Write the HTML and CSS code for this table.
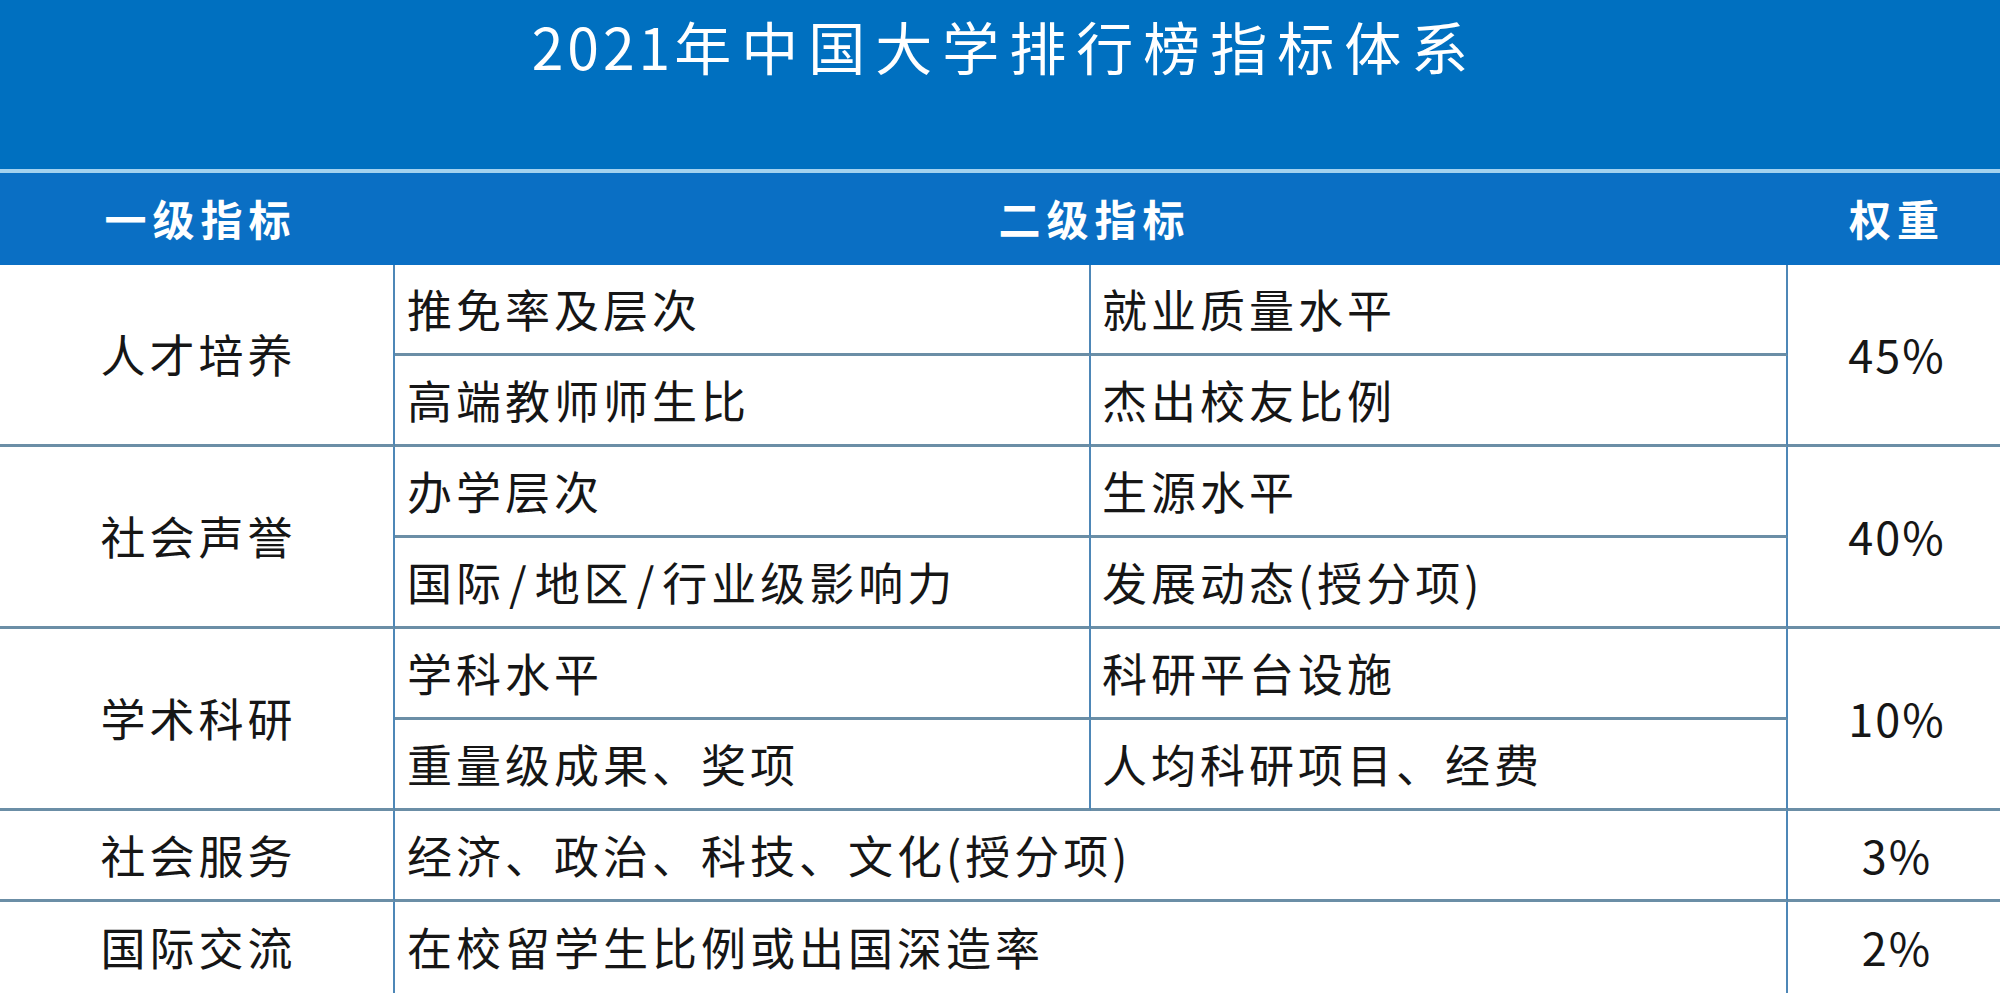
FILE: index.html
```html
<!DOCTYPE html>
<html lang="zh-CN">
<head>
<meta charset="utf-8">
<title>2021年中国大学排行榜指标体系</title>
<link rel="stylesheet" href="styles.css">
</head>
<body>
<div class="page">
  <header class="banner">
    <h1 class="title"><span class="digits">2021</span>年中国大学排行榜指标体系</h1>
  </header>
  <div class="head-row">
    <div class="hcell">一级指标</div>
    <div class="hcell">二级指标</div>
    <div class="hcell">权重</div>
  </div>
  <div class="grid">
    <div class="cell c1 r1-2">人才培养</div>
    <div class="cell c2">推免率及层次</div>
    <div class="cell c3">就业质量水平</div>
    <div class="cell c4 r1-2">45%</div>
    <div class="cell c2">高端教师师生比</div>
    <div class="cell c3">杰出校友比例</div>

    <div class="cell c1 r3-4">社会声誉</div>
    <div class="cell c2">办学层次</div>
    <div class="cell c3">生源水平</div>
    <div class="cell c4 r3-4">40%</div>
    <div class="cell c2">国际<span class="sl">/</span>地区<span class="sl">/</span>行业级影响力</div>
    <div class="cell c3">发展动态(授分项)</div>

    <div class="cell c1 r5-6">学术科研</div>
    <div class="cell c2">学科水平</div>
    <div class="cell c3">科研平台设施</div>
    <div class="cell c4 r5-6">10%</div>
    <div class="cell c2">重量级成果、奖项</div>
    <div class="cell c3">人均科研项目、经费</div>

    <div class="cell c1">社会服务</div>
    <div class="cell c23">经济、政治、科技、文化(授分项)</div>
    <div class="cell c4">3%</div>

    <div class="cell c1 last">国际交流</div>
    <div class="cell c23 last">在校留学生比例或出国深造率</div>
    <div class="cell c4 last">2%</div>
  </div>
</div>
</body>
</html>
```

FILE: styles.css
```css
* { box-sizing: border-box; }
html, body {
  margin: 0;
  padding: 0;
  background: #ffffff;
}
body {
  font-family: "Noto Sans CJK SC", "Noto Sans", sans-serif;
  width: 2000px;
  height: 994px;
  overflow: hidden;
}
.page {
  display: flex;
  flex-direction: column;
  width: 2000px;
}
.banner {
  height: 173px;
  background: #0070c0;
  border-bottom: 4px solid #a3d2ef;
}
.title {
  margin: 0;
  padding-top: 8px;
  height: 80px;
  line-height: 74px;
  text-align: center;
  color: #ffffff;
  font-weight: 400;
  font-size: 57px;
  letter-spacing: 10px;
  padding-left: 10px;
}
.digits {
  letter-spacing: 4px;
}
.head-row {
  display: grid;
  grid-template-columns: 395px 1393px 212px;
  height: 92px;
  background: #0a6fc4;
  color: #ffffff;
}
.hcell {
  display: flex;
  align-items: center;
  justify-content: center;
  font-size: 42px;
  font-weight: 700;
  letter-spacing: 6px;
  padding-left: 6px;
  padding-bottom: 4px;
}
.grid {
  display: grid;
  grid-template-columns: 395px 696px 697px 212px;
  grid-template-rows: repeat(8, 91px);
  color: #161616;
  font-size: 45px;
  letter-spacing: 4px;
}
.cell {
  display: flex;
  align-items: center;
  border-bottom: 3px solid #6b8ea6;
  border-right: 2px solid #4e87b7;
  padding-bottom: 2px;
  white-space: nowrap;
}
.sl {
  padding: 0 4px;
}
.c1 {
  grid-column: 1;
  justify-content: center;
  padding-left: 4px;
}
.c2 {
  grid-column: 2;
  padding-left: 12px;
}
.c3 {
  grid-column: 3;
  padding-left: 11px;
}
.c23 {
  grid-column: 2 / 4;
  padding-left: 12px;
}
.c4 {
  grid-column: 4;
  justify-content: center;
  border-right: none;
  letter-spacing: 2px;
  padding-left: 6px;
}
.r1-2 { grid-row: 1 / 3; }
.r3-4 { grid-row: 3 / 5; }
.r5-6 { grid-row: 5 / 7; }
.last { border-bottom: none; }
```
